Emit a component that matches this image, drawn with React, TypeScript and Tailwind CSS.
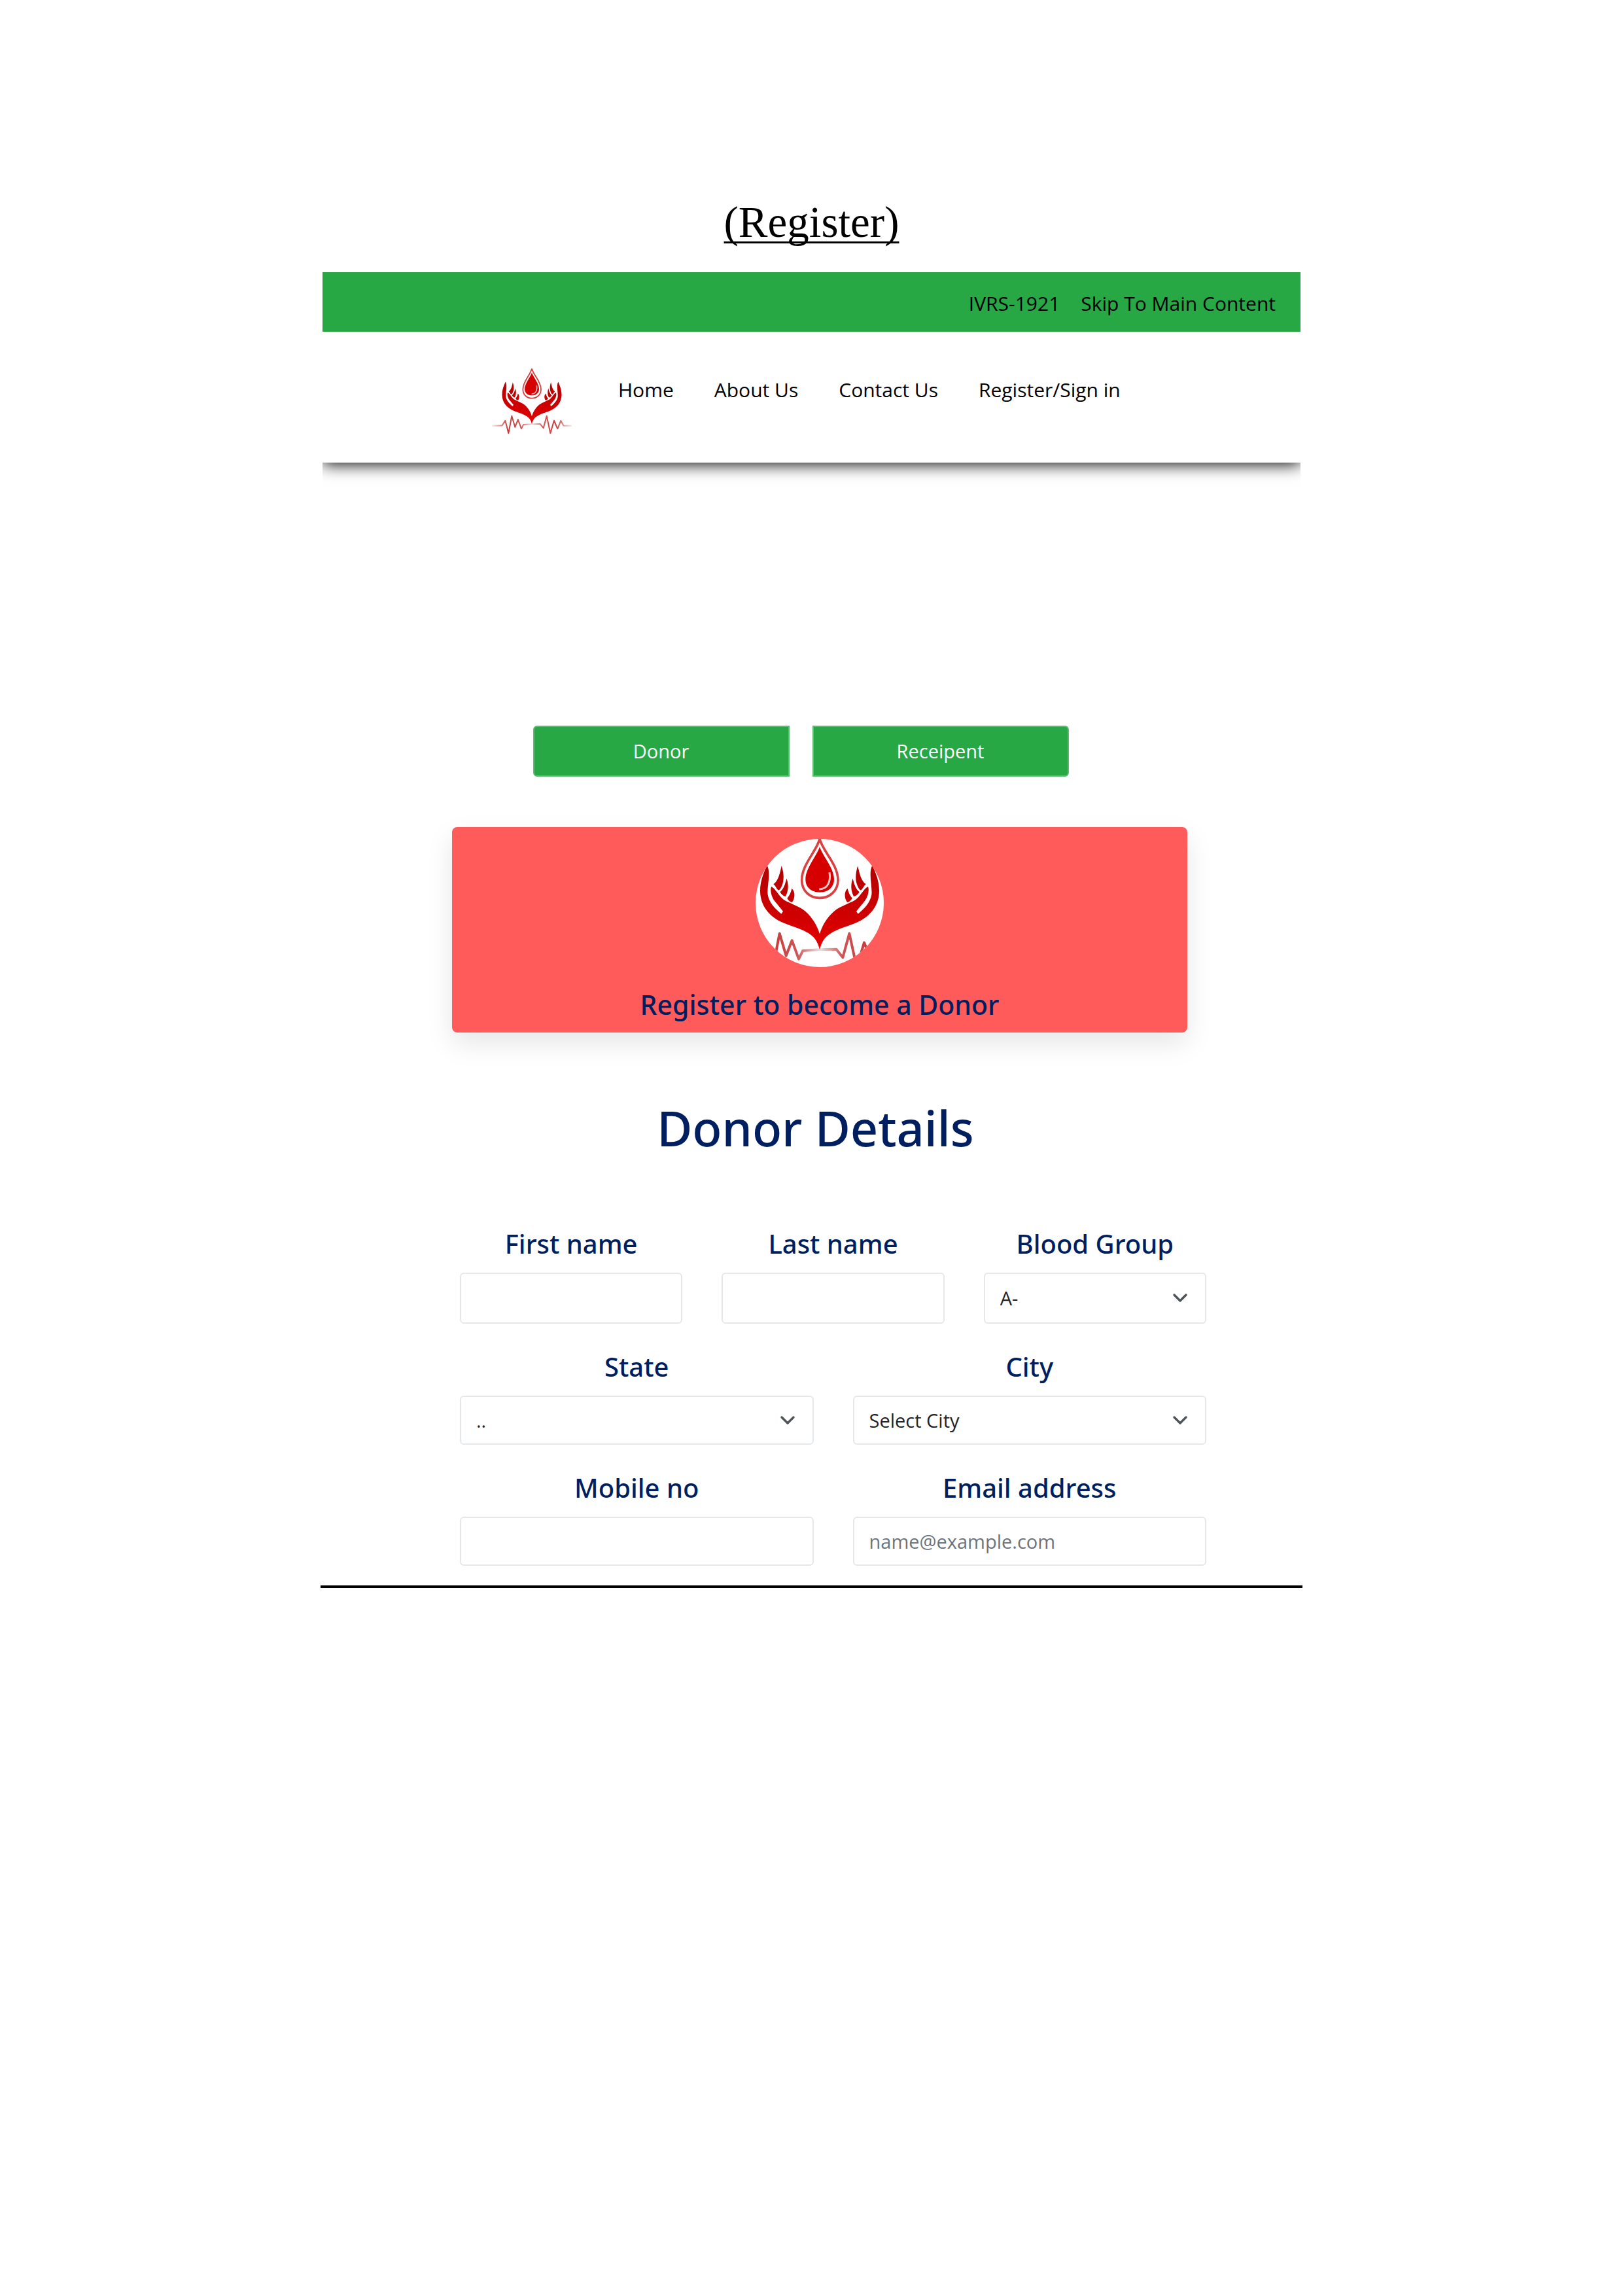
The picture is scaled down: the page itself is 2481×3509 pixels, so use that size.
import { useId, type ReactNode } from "react";

function HandHalf({ fill }: { fill: string }) {
  return (
    <g fill={fill}>
      <path d="M160 184 C150 212 129 250 129 302 C129 368 168 418 228 446 C282 470 348 482 380 522 C391 537 397 552 402 572 L402 500 C392 466 372 428 336 396 C306 372 268 362 238 344 C214 326 200 292 180 283 C174 300 180 330 196 350 L234 396 L226 408 C196 384 170 356 164 320 C160 280 180 220 160 184 Z" />
      <path d="M227 188 C236 214 240 246 232 270 C226 286 222 296 213 300 C204 294 202 282 190 272 C212 258 220 222 227 188 Z" />
      <path d="M250 246 C260 270 260 300 246 328 C236 328 226 318 220 308 C238 292 244 270 250 246 Z" />
      <path d="M274 292 C290 304 290 336 276 354 C266 354 258 346 253 336 C264 324 270 310 274 292 Z" />
    </g>
  );
}

function Logo({ viewBox, className }: { viewBox: string; className: string }) {
  const id = useId();
  const hand = `${id}-hand`;
  const pulse = `${id}-pulse`;
  return (
    <svg viewBox={viewBox} className={className} role="img" aria-label="Blood donation logo">
      <defs>
        <linearGradient id={hand} gradientUnits="userSpaceOnUse" x1="0" y1="190" x2="0" y2="560">
          <stop offset="0" stopColor="#b30000" />
          <stop offset="0.7" stopColor="#d40000" />
          <stop offset="1" stopColor="#e80000" />
        </linearGradient>
        <linearGradient id={pulse} gradientUnits="userSpaceOnUse" x1="35" y1="0" x2="769" y2="0">
          <stop offset="0" stopColor="#eeeeee" />
          <stop offset="0.2" stopColor="#c83a3a" />
          <stop offset="0.36" stopColor="#cf5555" />
          <stop offset="0.5" stopColor="#e2e2e2" />
          <stop offset="0.64" stopColor="#cf5555" />
          <stop offset="0.8" stopColor="#c83a3a" />
          <stop offset="1" stopColor="#eeeeee" />
        </linearGradient>
      </defs>
      <path
        d="M35 588 L128 586 L158 540 L188 655 L218 498 L248 600 L275 530 L306 615 L325 577 L402 572 L478 570 L508 608 L538 498 L572 655 L606 540 L638 615 L668 540 L692 586 L769 588"
        fill="none"
        stroke={`url(#${pulse})`}
        strokeWidth="12"
        strokeLinejoin="round"
      />
      <HandHalf fill={`url(#${hand})`} />
      <g transform="translate(804 0) scale(-1 1)">
        <HandHalf fill={`url(#${hand})`} />
      </g>
      <path
        d="M402 64 C388 122 320 180 320 254 C320 304 358 335 402 335 C446 335 486 304 486 254 C486 180 416 122 402 64 Z"
        fill="#ffffff"
        stroke="#dd4040"
        strokeWidth="11"
      />
      <path d="M402 100 C388 144 337 198 337 250 C337 288 366 309 402 309 C438 309 468 288 468 250 C468 198 416 144 402 100 Z" fill="#d60000" />
      <path d="M447 218 C454 262 438 294 400 295" fill="none" stroke="#f7c8c8" strokeWidth="9" />
    </svg>
  );
}

const control =
  "w-full rounded-md border-2 border-[#e5e8eb] bg-white px-[23px] text-[29px] text-[#212529] placeholder:text-[#6c757d] placeholder:opacity-100";

const heading = "font-['Noto_Sans',sans-serif] font-medium text-[#001f60]";

function Field({ id, label, children }: { id: string; label: string; children: ReactNode }) {
  return (
    <div className="flex min-w-0 flex-1 flex-col gap-4">
      <label htmlFor={id} className={`${heading} text-center text-[40px] leading-[56px]`}>
        {label}
      </label>
      {children}
    </div>
  );
}

function Select({ id, options, className }: { id: string; options: string[]; className: string }) {
  return (
    <div className="relative">
      <select id={id} className={`${control} appearance-none ${className}`}>
        {options.map((o) => (
          <option key={o}>{o}</option>
        ))}
      </select>
      <svg
        viewBox="0 0 24 16"
        className="pointer-events-none absolute top-1/2 right-[28px] h-4 w-6 -translate-y-1/2"
        fill="none"
        stroke="#50555a"
        strokeWidth="3.5"
        strokeLinecap="round"
        strokeLinejoin="round"
        aria-hidden="true"
      >
        <path d="M3 3 L12 12 L21 3" />
      </svg>
    </div>
  );
}

const navItems = ["Home", "About Us", "Contact Us", "Register/Sign in"];

export default function App() {
  return (
    <div className="min-h-screen bg-white pt-[299px] font-['Open_Sans','Noto_Sans',sans-serif]">
      <h1 className="mb-[37px] text-center font-['Liberation_Serif',serif] text-[67px] leading-[80px] text-black underline decoration-3 underline-offset-[7px] [text-decoration-skip-ink:none]">
        (Register)
      </h1>

      <div className="mx-auto max-w-[1501px] border-b-4 border-black px-[3px] pb-[30px]">
        <header>
          <div className="flex h-[91px] items-center justify-end gap-8 bg-[#28a745] pt-1 pr-[38px] text-[30px] text-black">
            <a href="#ivrs">IVRS-1921</a>
            <a href="#main">Skip To Main Content</a>
          </div>
          <nav className="flex h-[200px] items-start bg-white pl-[258px] shadow-[0_2px_24px_#000] [clip-path:inset(0_0_-60px_0)]">
            <a href="#home" className="mt-[55px] mr-[70px]">
              <Logo viewBox="30 56 744 610" className="h-[102px] w-[124px]" />
            </a>
            <ul className="mt-[67px] flex gap-[62px] text-[30px] leading-[44px] text-black">
              {navItems.map((item) => (
                <li key={item}>
                  <a href="#nav">{item}</a>
                </li>
              ))}
            </ul>
          </nav>
        </header>

        <main id="main" className="pt-[402px]">
          <div className="mr-[33px] flex justify-center gap-[35px] text-[29px] text-white">
            <button type="button" className="h-[78px] w-[392px] rounded-l-md border-2 border-[#5cbd73] bg-[#28a745]">
              Donor
            </button>
            <button type="button" className="h-[78px] w-[392px] rounded-r-md border-2 border-[#5cbd73] bg-[#28a745]">
              Receipent
            </button>
          </div>

          <section className="mt-[77px] mr-[173px] ml-[198px] flex flex-col items-center rounded-lg bg-[#ff5b5b] pt-[18px] pb-[15px] shadow-[0_16px_40px_rgba(0,0,0,0.1)]">
            <div className="overflow-hidden rounded-full bg-white">
              <Logo viewBox="108 64 588 588" className="size-[196px]" />
            </div>
            <h2 className={`${heading} mt-[29px] text-[41px] leading-[56px]`}>Register to become a Donor</h2>
          </section>

          <form className="mr-[144px] ml-[210px] flex flex-col gap-[38px]">
            <h2 className={`${heading} mt-[98px] mr-[54px] mb-[63px] text-center text-[74px] leading-[96px]`}>
              Donor Details
            </h2>
            <div className="flex gap-[60px]">
              <Field id="first" label="First name">
                <input id="first" type="text" className={`${control} h-[78px]`} />
              </Field>
              <Field id="last" label="Last name">
                <input id="last" type="text" className={`${control} h-[78px]`} />
              </Field>
              <Field id="blood" label="Blood Group">
                <Select id="blood" options={["A-", "A+", "B-", "B+", "AB-", "AB+", "O-", "O+"]} className="h-[78px]" />
              </Field>
            </div>
            <div className="flex gap-[60px]">
              <Field id="state" label="State">
                <Select id="state" options={[".."]} className="h-[75px]" />
              </Field>
              <Field id="city" label="City">
                <Select id="city" options={["Select City"]} className="h-[75px]" />
              </Field>
            </div>
            <div className="flex gap-[60px]">
              <Field id="mobile" label="Mobile no">
                <input id="mobile" type="tel" className={`${control} h-[75px]`} />
              </Field>
              <Field id="email" label="Email address">
                <input id="email" type="email" placeholder="name@example.com" className={`${control} h-[75px]`} />
              </Field>
            </div>
          </form>
        </main>
      </div>
    </div>
  );
}
